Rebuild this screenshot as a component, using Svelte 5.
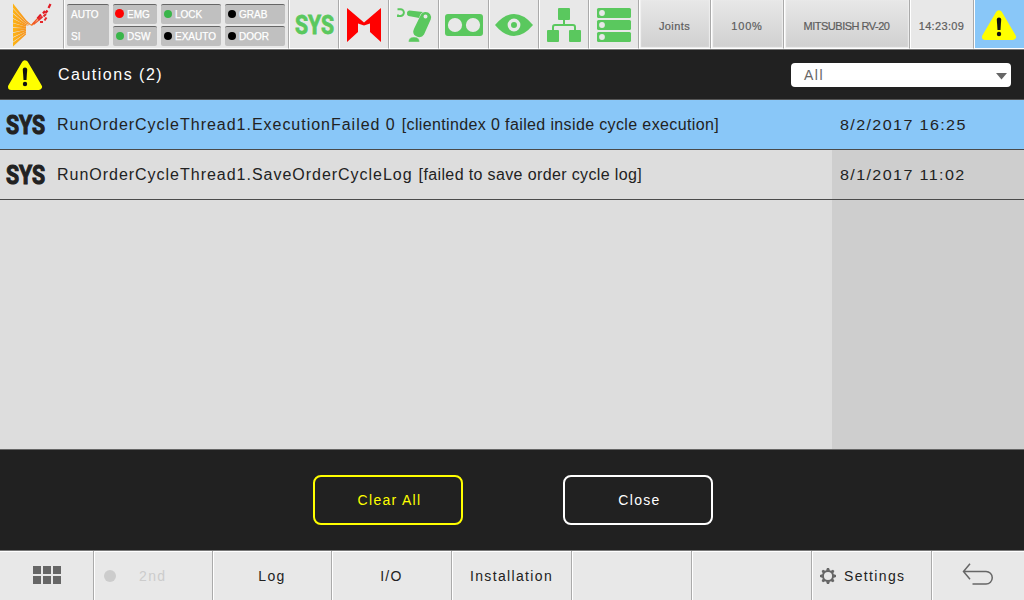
<script>
  const lamps = [
    [{ name: 'EMG', color: '#f00', big: true }, { name: 'DSW', color: '#39b54a' }],
    [{ name: 'LOCK', color: '#39b54a' }, { name: 'EXAUTO', color: '#000' }],
    [{ name: 'GRAB', color: '#000' }, { name: 'DOOR', color: '#000' }]
  ];
  const rows = [
    { source: 'RunOrderCycleThread1.ExecutionFailed 0', detail: '[clientindex 0 failed inside cycle execution]', time: '8/2/2017 16:25', active: true },
    { source: 'RunOrderCycleThread1.SaveOrderCycleLog', detail: '[failed to save order cycle log]', time: '8/1/2017 11:02', active: false }
  ];
</script>

{#snippet warning()}
  <svg class="warn" width="36" height="32" viewBox="0 0 36 32">
    <path d="M18 4.5 31.8 27.8H4.2Z" fill="#ff0" stroke="#ff0" stroke-width="6.4" stroke-linejoin="round" />
    <path d="M15.800 10.500q0-2 2.200-2t2.200 2l-.7 10.500h-3Z" fill="#111" />
    <circle cx="18" cy="25" r="2.200" fill="#111" />
  </svg>
{/snippet}

<div class="screen">
  <header class="top">
    <div class="cell logo">
      <svg width="50" height="48" viewBox="0 0 50 48">
        <defs>
          <linearGradient id="fan" gradientUnits="userSpaceOnUse" x1="13" y1="0" x2="34" y2="0">
            <stop offset="0" stop-color="#fdb515" /><stop offset=".6" stop-color="#f7931e" /><stop offset="1" stop-color="#f26a1b" />
          </linearGradient>
        </defs>
        <g fill="url(#fan)">
          <path d="M13 3.500 26.500 20.500 31 24.500 36 21 32 26 25.500 21.500 13 8Z" />
          <path d="M13 8.700 25.500 21.800 31 25.500 25.500 23.500 13 13Z" />
          <path d="M13 13.700 25.500 23.700 29 25.500 25.500 25.300 13 18Z" />
          <path d="M13 18.700 26 25.300V26.700L13 22.700Z" />
          <path d="M13 23.300 26 26.800V28.200L13 27.300Z" />
          <path d="M13 28 26 28.300V29.700L13 32.200Z" />
          <path d="M13 33 26 29.800V31.200L13 37Z" />
          <path d="M13 37.800 26 31.300V32.700L13 41.700Z" />
          <path d="M13 42.500 26 33V34.500L13 46.500Z" />
        </g>
        <g fill="none">
          <path d="m32.500 24 7-7.500M33.500 24.500l5.500-4.500" stroke="#f15a24" stroke-width="1.200" />
          <path d="m37.500 18.500 3.500-4M43 13.500l2-2.500M45.500 13l2-2.500M48.500 8l2-4" stroke="#e01b24" stroke-width="2.200" />
          <path d="m38.500 20 4-3.500M43.500 16.500l2.500-2.500M40 22h3M44.500 20.500l2-3" stroke="#e5282b" stroke-width="2" />
        </g>
      </svg>
    </div>
    <div class="cell status">
      <div class="lamp mode"><span>AUTO</span><span>SI</span></div>
      {#each lamps as col, c}
        <div class="lampcol" class:first={c === 0}>
          {#each col as l}
            <div class="lamp"><i class:big={l.big} style="background:{l.color}"></i><span>{l.name}</span></div>
          {/each}
        </div>
      {/each}
    </div>
    <div class="cell icon"><span class="sys green">SYS</span></div>
    <div class="cell icon">
      <svg width="48" height="48"><path d="M7 8 24 22.500 41 8V42L30 32V23.500L24 25.500 18 23.500V32L7 42Z" fill="red" /></svg>
    </div>
    <div class="cell icon">
      <svg width="48" height="48" fill="#5ac85e">
        <path d="M7.500 9.200h3a3.300 3.300 0 0 1 0 6.800H8V14.500" fill="none" stroke="#5ac85e" stroke-width="1.900" />
        <path d="M19.500 10.500 33 12Q29.500 14 29.300 18L18.500 16Q16.500 15 17 12.500 17.500 10.500 19.500 10.500Z" />
        <path fill-rule="evenodd" d="M35.500 12a5.500 5.500 0 0 1 5.200 7.500L34 34.500Q32 37.800 28 37 23 35.500 23.200 31.500q.2-1.500 1.200-3.500L30.500 15.500Q32 12 35.500 12Zm0 2.500a2 2 0 1 0 0 4 2 2 0 0 0 0-4Z" />
        <path d="M18.500 42q0-5 5.500-5t5.500 5Z" stroke="#e8e8e8" stroke-width=".4" />
      </svg>
    </div>
    <div class="cell icon">
      <svg width="48" height="48">
        <rect x="5" y="14" width="38" height="22" rx="3" fill="#5ac85e" />
        <circle cx="15" cy="25" r="7.100" fill="#e8e8e8" /><circle cx="33" cy="25" r="7.100" fill="#e8e8e8" />
      </svg>
    </div>
    <div class="cell icon">
      <svg width="48" height="48">
        <path d="M5 25Q14 14 24 14T43 25Q34 36 24 36T5 25Z" fill="#5ac85e" />
        <circle cx="24" cy="25" r="4.700" fill="#5ac85e" stroke="#e8e8e8" stroke-width="3.400" />
      </svg>
    </div>
    <div class="cell icon">
      <svg width="48" height="48" fill="#5ac85e">
        <rect x="18" y="8" width="12" height="12" rx="1" />
        <rect x="7" y="30" width="12" height="12" rx="1" /><rect x="29" y="30" width="12" height="12" rx="1" />
        <path d="M24 19v6M13 31v-4q0-2 2-2h18q2 0 2 2v4" fill="none" stroke="#5ac85e" stroke-width="2" />
      </svg>
    </div>
    <div class="cell icon">
      <svg width="48" height="48">
        {#each [8, 20, 32] as y}
          <rect x="7" {y} width="34" height="10" rx="1.500" fill="#5ac85e" />
          <circle cx="12" cy={y + 5} r="2.900" fill="#e8e8e8" />
        {/each}
      </svg>
    </div>
    <div class="cell grad joints"><span>Joints</span></div>
    <div class="cell grad speed"><span>100%</span></div>
    <div class="cell grad robot"><span>MITSUBISH RV-20</span></div>
    <div class="cell clock"><span>14:23:09</span></div>
    <div class="cell alert">{@render warning()}</div>
  </header>

  <section class="title">
    {@render warning()}
    <h1>Cautions (2)</h1>
    <div class="select"><span>All</span>
      <svg width="11" height="7"><path d="M0 0H11L5.500 6.500Z" fill="#666" /></svg>
    </div>
  </section>

  <main>
    {#each rows as r}
      <div class="row" class:active={r.active}>
        <div class="msg">
          <span class="sys">SYS</span>
          <span class="source">{r.source}</span><span class="detail">{r.detail}</span>
        </div>
        <div class="time"><span>{r.time}</span></div>
      </div>
    {/each}
  </main>

  <section class="actions">
    <button class="clear">Clear All</button>
    <button>Close</button>
  </section>

  <nav>
    <div class="tab">
      <svg width="28" height="18" fill="#666">
        {#each [0, 10] as y}{#each [0, 10, 20] as x}<rect {x} {y} width="8" height="8" />{/each}{/each}
      </svg>
    </div>
    <div class="tab second"><i></i><span>2nd</span></div>
    <div class="tab"><span>Log</span></div>
    <div class="tab"><span>I/O</span></div>
    <div class="tab install"><span>Installation</span></div>
    <div class="tab"></div>
    <div class="tab"></div>
    <div class="tab settings">
      <svg width="16" height="16" viewBox="-8 -8 16 16">
        <circle r="5" fill="none" stroke="#666" stroke-width="1.900" />
        {#each [0, 45, 90, 135, 180, 225, 270, 315] as a}
          <path d="M-2-5.200-1-8H1L2-5.200Z" fill="#666" transform="rotate({a})" />
        {/each}
      </svg>
      <span>Settings</span>
    </div>
    <div class="tab">
      <svg class="back" width="32" height="24" viewBox="0 0 32 24" fill="none" stroke="#666" stroke-width="1.500">
        <path d="M8 .8 1.500 8.500 8 16.200M1.500 8.500H24a6.200 6.200 0 0 1 0 12.500H10.500" />
      </svg>
    </div>
  </nav>
</div>

<style>
  :global(body) { margin: 0; }
  .screen {
    width: 1024px; height: 600px; box-sizing: border-box; overflow: hidden;
    display: grid; grid-template-rows: 50px 50px 349px 101px 50px;
    background: #212121; color: #222;
    font-family: "Liberation Sans", Arial, sans-serif;
  }
  svg { display: block; flex: none; }
  span { white-space: pre; }

  .top {
    display: grid; box-sizing: border-box;
    grid-template-columns: 63px 225px repeat(7, 50px) 72px 73px 126px 64px 1fr;
    background: #e8e8e8; border-bottom: 1px solid #777;
  }
  .cell {
    box-sizing: border-box; height: 49px; border-left: 1px solid #aaa; border-bottom: 1px solid #fff;
    box-shadow: inset 1px 0 #fff; display: flex; align-items: center; justify-content: center;
    color: #5d5d5d; font-size: 11px; line-height: 14px;
  }
  .logo { border-left: 0; box-shadow: none; justify-content: flex-start; }
  .logo svg { width: 50px; margin-right: 13px; overflow: visible; }
  .icon { padding-left: 1px; }
  .status { justify-content: flex-start; align-items: flex-start; gap: 4px; padding: 4px 0 0 3px; }
  .lampcol { width: 60px; display: flex; flex-direction: column; gap: 2px; }
  .lampcol.first { width: 44px; }
  .lamp {
    height: 20px; box-sizing: border-box; border-top: 1px solid #666; border-radius: 2px;
    background: #c0c0c0; color: #fff; font-size: 10px; line-height: 20px;
    display: flex; align-items: center; padding: 0 0 0 3px; -webkit-text-stroke: .25px #fff;
  }
  .lamp i { width: 8px; height: 8px; border-radius: 50%; margin: -1px 3px 0 0; }
  .lamp i.big { width: 9px; height: 9px; margin: -2px 3px 0 -1px; }
  .mode { width: 42px; height: 42px; padding-left: 4px; flex-direction: column; align-items: flex-start; }
  .mode span { height: 22px; flex: none; }
  .sys {
    font: 700 25px/30px Roboto, sans-serif; color: #222; display: inline-block;
    width: 47px; margin: 0 -4px; text-align: center; transform: scaleX(.85);
    -webkit-text-stroke: 1.1px currentColor;
  }
  .sys.green { color: #5ac85e; margin: 3px -4px 0 -4px; -webkit-text-stroke-width: .8px; }
  .grad { background: linear-gradient(#e8e8e8, #d0d0d0); box-shadow: inset 1px 0 #fff, inset 2px 0 1px #f2f2f2, inset -1px -1px 1px #eee; }
  .grad, .clock { -webkit-text-stroke: .2px #5d5d5d; }
  .joints span { letter-spacing: .4px; padding-top: 3px; }
  .speed span { letter-spacing: .8px; padding-top: 4px; }
  .robot span { letter-spacing: -.5px; padding-top: 4px; }
  .clock span { letter-spacing: .35px; padding-top: 3px; }
  .alert { background: #89c7f8; }
  .alert svg { margin-top: 2px; }

  .title { display: flex; align-items: center; padding: 0 13px 0 7px; border-bottom: 1px solid #555; box-sizing: border-box; }
  h1 { margin: 0 auto 0 15px; color: #fff; font-size: 16px; font-weight: 400; letter-spacing: 1.5px; }
  .select {
    width: 220px; height: 24px; box-sizing: border-box; padding: 0 4px 0 13px; border-radius: 4px;
    background: #fff; color: #666; display: flex; align-items: center; justify-content: space-between;
    font-size: 14px; letter-spacing: 1.5px;
  }
  .select svg { margin-top: 3px; }

  main { background: linear-gradient(90deg, #ddd 832px, #cecece 832px); }
  .row { height: 50px; box-sizing: border-box; border-bottom: 1px solid #4a4a4a; display: grid; grid-template-columns: 832px 1fr; }
  .active { background: #89c7f8; }
  .msg { display: flex; align-items: center; padding-left: 6px; font-size: 16px; }
  .msg .sys { margin: 3px 8px 0 -4px; }
  .source { letter-spacing: .98px; }
  .detail { letter-spacing: .37px; margin-left: 6px; }
  .time { display: flex; align-items: center; padding: 1px 0 0 8px; font-size: 14px; }
  .time span { transform: scaleX(1.15); transform-origin: left; letter-spacing: 1.2px; }

  .actions { border-top: 1px solid #666; box-sizing: border-box; display: flex; gap: 100px; padding: 25px 0 0 313px; }
  button {
    width: 150px; height: 50px; box-sizing: border-box; border: 2px solid #fff; border-radius: 8px; background: none;
    color: #fff; font: 14px "Liberation Sans", Arial, sans-serif; letter-spacing: 1.3px; padding: 0 0 0 3px;
  }
  .clear { color: #ff0; border-color: #ff0; }

  nav { display: grid; grid-template-columns: 93px 119px 119px 120px 120px 120px 120px 120px 1fr; background: #e8e8e8; border-top: 1px solid #777; box-sizing: border-box; }
  .tab {
    box-sizing: border-box; border-left: 1px solid #aaa; box-shadow: inset 1px 0 #fff, inset 0 1px #fff;
    display: flex; align-items: center; justify-content: center; padding-top: 1px;
    font-size: 14px; letter-spacing: 1.35px;
  }
  .tab:first-child { border-left: 0; box-shadow: inset 0 1px #fff; padding: 0 0 1px; }
  .second { justify-content: flex-start; color: #ccc; padding-left: 10px; }
  .second i { width: 12px; height: 12px; border-radius: 50%; background: #ccc; margin-right: 23px; }
  .settings { justify-content: flex-start; padding-left: 8px; gap: 8px; }
  .back { margin-bottom: 2px; }
</style>
